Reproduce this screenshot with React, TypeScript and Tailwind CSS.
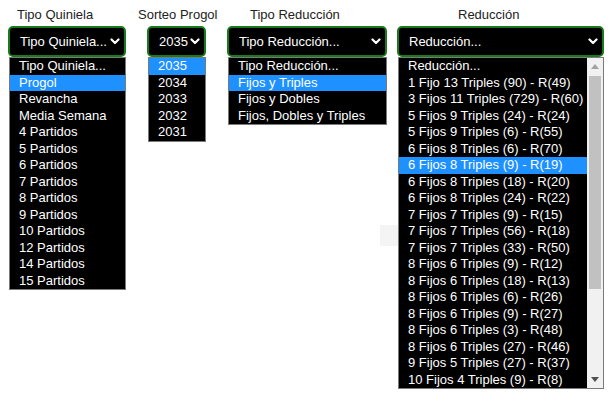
import React from "react";

type Column = {
  label: string;
  labelOffset: string;
  width: string;
  gap: string;
  value: string;
  options: string[];
  selected: number;
  scroll?: boolean;
};

const columns: Column[] = [
  {
    label: "Tipo Quiniela",
    labelOffset: "ml-[9px]",
    width: "w-[118px]",
    gap: "ml-0",
    value: "Tipo Quiniela...",
    options: [
      "Tipo Quiniela...",
      "Progol",
      "Revancha",
      "Media Semana",
      "4 Partidos",
      "5 Partidos",
      "6 Partidos",
      "7 Partidos",
      "8 Partidos",
      "9 Partidos",
      "10 Partidos",
      "12 Partidos",
      "14 Partidos",
      "15 Partidos",
    ],
    selected: 1,
  },
  {
    label: "Sorteo Progol",
    labelOffset: "ml-[-9px]",
    width: "w-[59px]",
    gap: "ml-[21px]",
    value: "2035",
    options: ["2035", "2034", "2033", "2032", "2031"],
    selected: 0,
  },
  {
    label: "Tipo Reducción",
    labelOffset: "ml-[23px]",
    width: "w-[160px]",
    gap: "ml-[21px]",
    value: "Tipo Reducción...",
    options: ["Tipo Reducción...", "Fijos y Triples", "Fijos y Dobles", "Fijos, Dobles y Triples"],
    selected: 1,
  },
  {
    label: "Reducción",
    labelOffset: "ml-[61px]",
    width: "w-[207px]",
    gap: "ml-[10px]",
    value: "Reducción...",
    options: [
      "Reducción...",
      "1 Fijo 13 Triples (90) - R(49)",
      "3 Fijos 11 Triples (729) - R(60)",
      "5 Fijos 9 Triples (24) - R(24)",
      "5 Fijos 9 Triples (6) - R(55)",
      "6 Fijos 8 Triples (6) - R(70)",
      "6 Fijos 8 Triples (9) - R(19)",
      "6 Fijos 8 Triples (18) - R(20)",
      "6 Fijos 8 Triples (24) - R(22)",
      "7 Fijos 7 Triples (9) - R(15)",
      "7 Fijos 7 Triples (56) - R(18)",
      "7 Fijos 7 Triples (33) - R(50)",
      "8 Fijos 6 Triples (9) - R(12)",
      "8 Fijos 6 Triples (18) - R(13)",
      "8 Fijos 6 Triples (6) - R(26)",
      "8 Fijos 6 Triples (9) - R(27)",
      "8 Fijos 6 Triples (3) - R(48)",
      "8 Fijos 6 Triples (27) - R(46)",
      "9 Fijos 5 Triples (27) - R(37)",
      "10 Fijos 4 Triples (9) - R(8)",
    ],
    selected: 6,
    scroll: true,
  },
];

function Chevron() {
  return (
    <svg width="10" height="7" viewBox="0 0 10 7" className="shrink-0">
      <polyline points="1.5,1.5 5,5 8.5,1.5" fill="none" stroke="#fff" strokeWidth="2.2" strokeLinecap="round" strokeLinejoin="round" />
    </svg>
  );
}

function Scrollbar() {
  return (
    <div className="flex w-[16px] shrink-0 flex-col bg-[#f1f1f1]">
      <div className="flex h-[17px] items-center justify-center">
        <svg width="8" height="5" viewBox="0 0 8 5">
          <polygon points="0,5 8,5 4,0" fill="#a3a3a3" />
        </svg>
      </div>
      <div className="mx-[2px] mt-[1px] h-[213px] bg-[#c1c1c1]" />
      <div className="flex-1" />
      <div className="flex h-[17px] items-center justify-center">
        <svg width="8" height="5" viewBox="0 0 8 5">
          <polygon points="0,0 8,0 4,5" fill="#505050" />
        </svg>
      </div>
    </div>
  );
}

export default function App() {
  return (
    <div className="relative h-[395px] w-[612px] overflow-hidden bg-white font-['Liberation_Sans',Arial,sans-serif] text-[13px]">
      <div className="absolute left-[380px] top-[225px] h-[21px] w-[40px] bg-[#f4f4f4]" />
      <div className="relative flex items-start pl-[8px] pt-[7px]">
        {columns.map((col) => (
          <div key={col.label} className={`${col.gap} ${col.width} flex shrink-0 flex-col`}>
            <div className={`${col.labelOffset} h-[16px] whitespace-nowrap leading-[16px] text-[#222]`}>
              {col.label}
            </div>
            <div className="mt-[3px] flex h-[31px] items-center justify-between rounded-[5px] border-2 border-[#187a18] bg-black pl-[10px] pr-[4px] text-white">
              <span className="whitespace-nowrap leading-[16px]">{col.value}</span>
              <Chevron />
            </div>
            <div className="ml-[1px] flex border border-[#7a7a7a] bg-black text-white">
              <div className="min-w-0 flex-1">
                {col.options.map((opt, i) => (
                  <div
                    key={opt + i}
                    className={`h-[16.5px] whitespace-nowrap pl-[9px] leading-[16.5px] ${
                      i === col.selected ? "bg-[#1e90ff]" : ""
                    }`}
                  >
                    {opt}
                  </div>
                ))}
              </div>
              {col.scroll ? <Scrollbar /> : null}
            </div>
          </div>
        ))}
      </div>
    </div>
  );
}
